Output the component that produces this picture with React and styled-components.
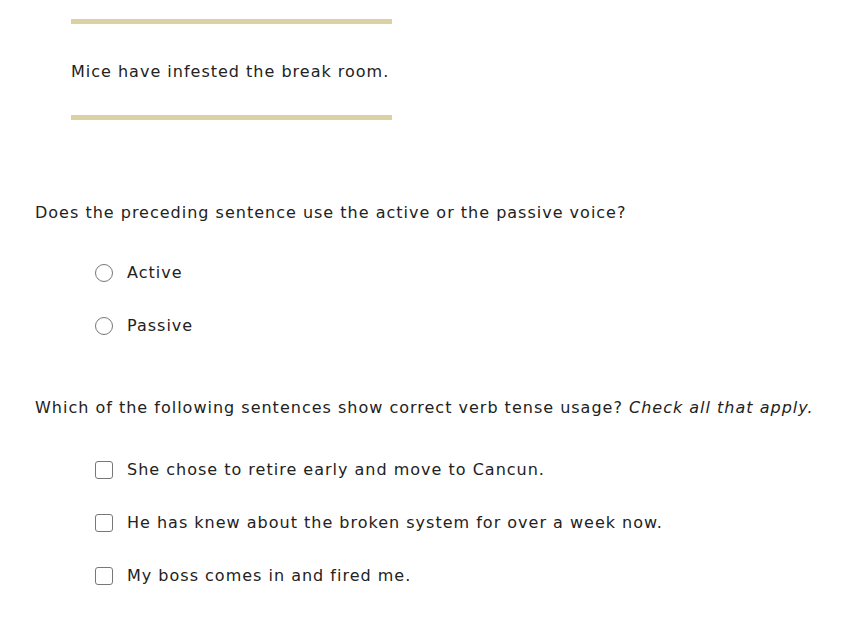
import React from 'react';
import styled, { createGlobalStyle } from 'styled-components';

const GlobalStyle = createGlobalStyle`
    body {
        margin: 0;
        background: #fff;
        font-family: Verdana, "DejaVu Sans", sans-serif;
        color: #222;
        letter-spacing: 1px;
    }
`

const Page = styled.main`
    padding: 19px 0 0 35px;
    font-size: 16px;
`

const Passage = styled.section`
    width: 321px;
    margin-left: 36px;
    border-top: 5px solid #dcd1a5;
    border-bottom: 5px solid #dcd1a5;
    padding: 38px 0 33px;
    line-height: 20px;
    font-size: 16px;
`

const Question = styled.fieldset`
    border: none;
    margin: 0;
    padding: 0;
    margin-top: ${props => props.$top}px;
`

const Prompt = styled.p`
    margin: 0;
    line-height: 20px;
    em {
        font-style: italic;
    }
`

const Options = styled.div`
    display: flex;
    flex-direction: column;
    gap: 33px;
    margin: ${props => props.$top}px 0 0 60px;
`

const Option = styled.label`
    display: flex;
    align-items: center;
    gap: 14px;
    line-height: 20px;
`

const Control = styled.span`
    width: 16px;
    height: 16px;
    border: 1.5px solid #777;
    border-radius: ${props => (props.$round ? '50%' : '3px')};
    background: #fff;
    flex: none;
`

function Choice({ round, children }) {
    return (
        <Option>
            <Control $round={round} />
            <span>{children}</span>
        </Option>
    )
}

export default function App() {
    return (
        <>
            <GlobalStyle />
            <Page>
                <Passage>Mice have infested the break room.</Passage>
                <Question $top={83}>
                    <Prompt>Does the preceding sentence use the active or the passive voice?</Prompt>
                    <Options $top={40}>
                        <Choice round>Active</Choice>
                        <Choice round>Passive</Choice>
                    </Options>
                </Question>
                <Question $top={62}>
                    <Prompt>
                        Which of the following sentences show correct verb tense usage? <em>Check all that apply.</em>
                    </Prompt>
                    <Options $top={42}>
                        <Choice>She chose to retire early and move to Cancun.</Choice>
                        <Choice>He has knew about the broken system for over a week now.</Choice>
                        <Choice>My boss comes in and fired me.</Choice>
                    </Options>
                </Question>
            </Page>
        </>
    )
}
